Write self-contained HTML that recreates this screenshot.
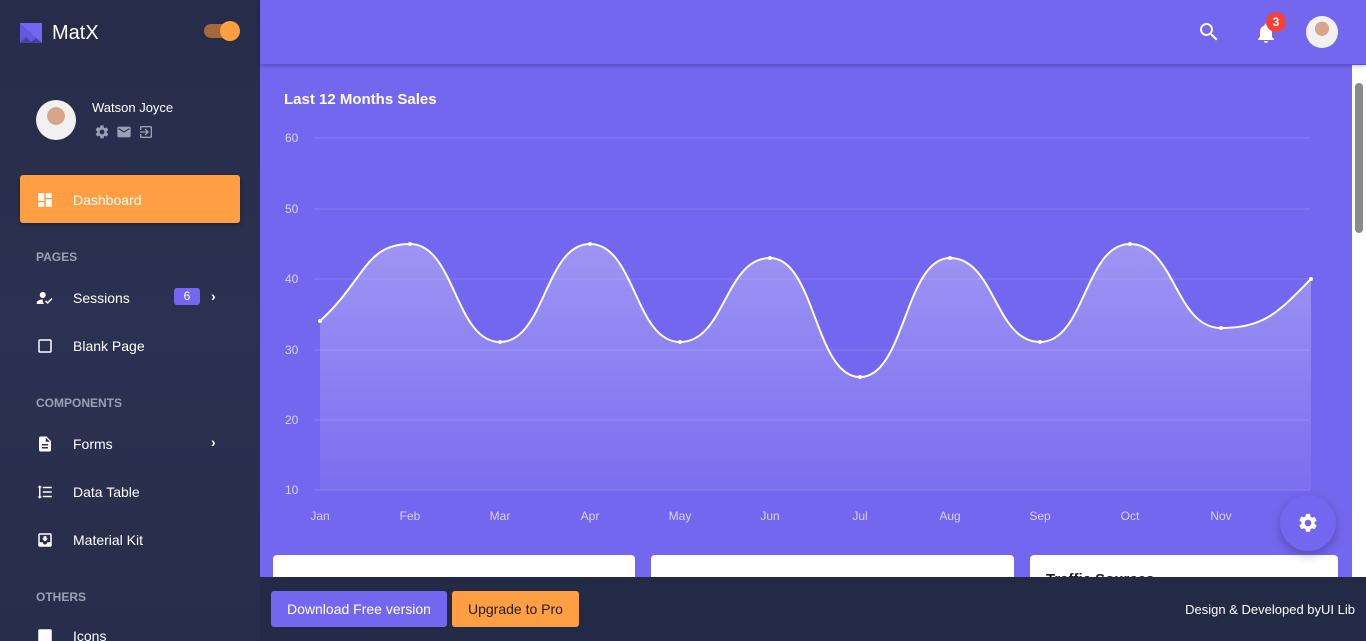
<!DOCTYPE html>
<html><head><meta charset="utf-8"><style>
*{margin:0;padding:0;box-sizing:border-box}
html,body{width:1366px;height:641px;overflow:hidden}
body{font-family:"Liberation Sans",sans-serif;background:#7467ef;position:relative}
.sb{position:absolute;left:0;top:0;width:260px;height:641px;background:linear-gradient(180deg,#262c49 0%,#2b3150 50%,#272d4a 100%);color:#fff}
.logo{position:absolute;left:20px;top:22px;display:flex;align-items:center;font-size:20px}
.tog{position:absolute;left:204px;top:24px;width:32px;height:14px;border-radius:7px;background:#a6683a}
.tog:after{content:"";position:absolute;right:-4px;top:-3px;width:20px;height:20px;border-radius:50%;background:#ff9e43}
.av{border-radius:50%;background:radial-gradient(circle at 50% 40%,#d9a58a 0 28%,#f1f1f1 29%);overflow:hidden;position:absolute}
.item{position:absolute;left:36px;font-size:14px;display:flex;align-items:center}
.item svg{margin-right:19px}
.sec{position:absolute;left:36px;font-size:12px;color:#9aa0b5;font-weight:bold}
.top{position:absolute;left:260px;top:0;width:1106px;height:64px;background:#7467ef;box-shadow:0 2px 4px rgba(0,0,0,.25);z-index:2}
.foot{position:absolute;left:260px;top:577px;width:1106px;height:64px;background:#222a45;z-index:3}
.btn{position:absolute;top:14px;height:36px;border-radius:3px;font-size:14px;display:flex;align-items:center;padding:0 16px}
.card{position:absolute;top:555px;height:40px;background:#fff;border-radius:4px}
.scroll{position:absolute;left:1352px;top:65px;width:14px;height:512px;background:#fff}
</style></head><body>
<div class="sb">
 <div class="logo"><svg width="22" height="22" viewBox="0 0 22 22"><path d="M0 0H22V20L16 15 11 19 6 14 0 20Z" fill="#7467ef"/><path d="M0 0L22 20H0Z" fill="#5a4fd6" opacity=".6"/></svg><span style="margin-left:10px">MatX</span></div>
 <div class="tog"></div>
 <div class="av" style="left:36px;top:100px;width:40px;height:40px"></div>
 <div style="position:absolute;left:92px;top:100px;font-size:13px">Watson Joyce</div>
 <div style="position:absolute;left:94px;top:124px;display:flex;gap:6px">
  <svg width="16" height="16" viewBox="0 0 24 24"><path fill="#9aa0b5" d="M19.14 12.94c.04-.3.06-.61.06-.94s-.02-.64-.07-.94l2.03-1.58a.49.49 0 00.12-.61l-1.92-3.32a.49.49 0 00-.59-.22l-2.39.96c-.5-.38-1.03-.7-1.62-.94l-.36-2.54A.48.48 0 0013.92 2h-3.84c-.24 0-.43.17-.47.41l-.36 2.54c-.59.24-1.13.57-1.62.94l-2.39-.96a.49.49 0 00-.59.22L2.74 8.87c-.12.21-.08.47.12.61l2.03 1.58c-.05.3-.09.63-.09.94s.02.64.07.94l-2.03 1.58a.49.49 0 00-.12.61l1.92 3.32c.12.22.37.29.59.22l2.39-.96c.5.38 1.03.7 1.62.94l.36 2.54c.05.24.24.41.48.41h3.84c.24 0 .44-.17.47-.41l.36-2.54c.59-.24 1.13-.56 1.62-.94l2.39.96c.22.08.47 0 .59-.22l1.92-3.32c.12-.22.07-.47-.12-.61l-2.01-1.58zM12 15.6A3.6 3.6 0 1112 8.4a3.6 3.6 0 010 7.2z"/></svg>
  <svg width="16" height="16" viewBox="0 0 24 24"><path fill="#9aa0b5" d="M20 4H4c-1.1 0-2 .9-2 2v12c0 1.1.9 2 2 2h16c1.1 0 2-.9 2-2V6c0-1.1-.9-2-2-2zm0 4l-8 5-8-5V6l8 5 8-5v2z"/></svg>
  <svg width="16" height="16" viewBox="0 0 24 24"><path fill="#9aa0b5" d="M10.09 15.59L11.5 17l5-5-5-5-1.41 1.41L12.67 11H3v2h9.67l-2.58 2.59zM19 3H5a2 2 0 00-2 2v4h2V5h14v14H5v-4H3v4a2 2 0 002 2h14c1.1 0 2-.9 2-2V5c0-1.1-.9-2-2-2z"/></svg>
 </div>
 <div style="position:absolute;left:20px;top:175px;width:220px;height:48px;background:#ff9e43;border-radius:3px;box-shadow:0 2px 4px rgba(0,0,0,.3)"></div>
 <div class="item" style="top:191px"><svg width="18" height="18" viewBox="0 0 24 24"><path fill="#fff" d="M3 13h8V3H3v10zm0 8h8v-6H3v6zm10 0h8V11h-8v10zm0-18v6h8V3h-8z"/></svg>Dashboard</div>
 <div class="sec" style="top:250px">PAGES</div>
 <div class="item" style="top:289px"><svg width="18" height="18" viewBox="0 0 24 24"><path fill="#fff" d="M9 12c2.2 0 4-1.8 4-4s-1.8-4-4-4-4 1.8-4 4 1.8 4 4 4zm0 2c-2.7 0-8 1.3-8 4v2h9.5l-.5-1 .5-.7c-.5-.1-1-.2-1.5-.3zm6.5 6l-3.5-3.5 1.4-1.4 2.1 2.1 5.1-5.2 1.4 1.4z"/></svg>Sessions</div>
 <div style="position:absolute;left:174px;top:288px;width:26px;height:17px;border-radius:3px;background:#7467ef;font-size:12px;text-align:center;line-height:17px">6</div>
 <div style="position:absolute;left:211px;top:288px;font-size:14px;font-weight:bold">›</div>
 <div class="item" style="top:337px"><svg width="18" height="18" viewBox="0 0 24 24"><path fill="#fff" d="M19 5v14H5V5h14m0-2H5c-1.1 0-2 .9-2 2v14c0 1.1.9 2 2 2h14c1.1 0 2-.9 2-2V5c0-1.1-.9-2-2-2z"/></svg>Blank Page</div>
 <div class="sec" style="top:396px">COMPONENTS</div>
 <div class="item" style="top:435px"><svg width="18" height="18" viewBox="0 0 24 24"><path fill="#fff" d="M14 2H6c-1.1 0-2 .9-2 2v16c0 1.1.9 2 2 2h12c1.1 0 2-.9 2-2V8l-6-6zm2 16H8v-2h8v2zm0-4H8v-2h8v2zm-3-5V3.5L18.5 9H13z"/></svg>Forms</div>
 <div style="position:absolute;left:211px;top:434px;font-size:14px;font-weight:bold">›</div>
 <div class="item" style="top:483px"><svg width="18" height="18" viewBox="0 0 24 24"><path fill="#fff" d="M9 5h12v2H9zm0 6h12v2H9zm0 6h12v2H9zM5 3L2 6h2v12H2l3 3 3-3H6V6h2z"/></svg>Data Table</div>
 <div class="item" style="top:531px"><svg width="18" height="18" viewBox="0 0 24 24"><path fill="#fff" d="M19 3H5c-1.1 0-2 .9-2 2v14c0 1.1.9 2 2 2h14c1.1 0 2-.9 2-2V5c0-1.1-.9-2-2-2zm0 12h-4c0 1.66-1.35 3-3 3s-3-1.34-3-3H5V5h14v10zm-3-5h-2V7h-4v3H8l4 4 4-4z"/></svg>Material Kit</div>
 <div class="sec" style="top:590px">OTHERS</div>
 <div class="item" style="top:627px"><svg width="18" height="18" viewBox="0 0 24 24"><rect x="3" y="3" width="18" height="18" rx="2" fill="#fff"/></svg>Icons</div>
</div>
<div class="top">
 <svg style="position:absolute;left:937px;top:20px" width="24" height="24" viewBox="0 0 24 24"><path fill="#fff" d="M15.5 14h-.79l-.28-.27A6.47 6.47 0 0016 9.5 6.5 6.5 0 109.5 16c1.61 0 3.09-.59 4.23-1.57l.27.28v.79l5 4.99L20.49 19l-4.99-5zm-6 0C7.01 14 5 11.99 5 9.5S7.01 5 9.5 5 14 7.01 14 9.5 11.99 14 9.5 14z"/></svg>
 <svg style="position:absolute;left:994px;top:21px" width="24" height="24" viewBox="0 0 24 24"><path fill="#fff" d="M12 22c1.1 0 2-.9 2-2h-4c0 1.1.89 2 2 2zm6-6v-5c0-3.07-1.64-5.64-4.5-6.32V4c0-.83-.67-1.5-1.5-1.5s-1.5.67-1.5 1.5v.68C7.63 5.36 6 7.92 6 11v5l-2 2v1h16v-1l-2-2z"/></svg>
 <div style="position:absolute;left:1006px;top:12px;width:20px;height:20px;border-radius:50%;background:#f44336;color:#fff;font-size:12px;font-weight:bold;text-align:center;line-height:20px">3</div>
 <div class="av" style="left:1046px;top:16px;width:32px;height:32px"></div>
</div>
<svg style="position:absolute;left:260px;top:64px" width="1092" height="513" viewBox="260 64 1092 513">
 <defs><linearGradient id="g" x1="0" y1="0" x2="0" y2="1"><stop offset="0" stop-color="#fff" stop-opacity=".3"/><stop offset="1" stop-color="#fff" stop-opacity=".05"/></linearGradient></defs>
 <text x="284" y="104" fill="#fff" font-size="15" font-weight="bold" font-family="Liberation Sans">Last 12 Months Sales</text>
 <g stroke="#fff" stroke-opacity=".15" stroke-width="1">
  <line x1="314" y1="138" x2="1310" y2="138"/><line x1="314" y1="209" x2="1310" y2="209"/><line x1="314" y1="279" x2="1310" y2="279"/><line x1="314" y1="350" x2="1310" y2="350"/><line x1="314" y1="420" x2="1310" y2="420"/><line x1="314" y1="490" x2="1310" y2="490"/>
 </g>
 <g fill="#d6d2fb" font-size="12" font-family="Liberation Sans">
  <text x="285" y="142">60</text><text x="285" y="213">50</text><text x="285" y="283">40</text><text x="285" y="354">30</text><text x="285" y="424">20</text><text x="285" y="494">10</text>
 </g>
 <g fill="#d6d2fb" font-size="12" font-family="Liberation Sans" text-anchor="middle">
  <text x="320" y="520">Jan</text><text x="410" y="520">Feb</text><text x="500" y="520">Mar</text><text x="590" y="520">Apr</text><text x="680" y="520">May</text><text x="770" y="520">Jun</text><text x="860" y="520">Jul</text><text x="950" y="520">Aug</text><text x="1040" y="520">Sep</text><text x="1130" y="520">Oct</text><text x="1221" y="520">Nov</text>
 </g>
 <path d="M320,321 C365,280 365,244 410,244 C455,244 455,342 500,342 C545,342 545,244 590,244 C635,244 635,342 680,342 C725,342 725,258 770,258 C815,258 815,377 860,377 C905,377 905,258 950,258 C995,258 995,342 1040,342 C1085,342 1085,244 1130,244 C1175,244 1175,328 1221,328 C1266,328 1280,310 1311,279 L1311,490 L320,490Z" fill="url(#g)"/>
 <path d="M320,321 C365,280 365,244 410,244 C455,244 455,342 500,342 C545,342 545,244 590,244 C635,244 635,342 680,342 C725,342 725,258 770,258 C815,258 815,377 860,377 C905,377 905,258 950,258 C995,258 995,342 1040,342 C1085,342 1085,244 1130,244 C1175,244 1175,328 1221,328 C1266,328 1280,310 1311,279" fill="none" stroke="#fff" stroke-width="2"/>
 <g fill="#fff"><circle cx="320" cy="321" r="2"/><circle cx="410" cy="244" r="2"/><circle cx="500" cy="342" r="2"/><circle cx="590" cy="244" r="2"/><circle cx="680" cy="342" r="2"/><circle cx="770" cy="258" r="2"/><circle cx="860" cy="377" r="2"/><circle cx="950" cy="258" r="2"/><circle cx="1040" cy="342" r="2"/><circle cx="1130" cy="244" r="2"/><circle cx="1221" cy="328" r="2"/><circle cx="1311" cy="279" r="2"/></g>
</svg>
<div class="card" style="left:273px;width:362px"></div>
<div class="card" style="left:651px;width:363px"></div>
<div class="card" style="left:1030px;width:308px"><div style="position:absolute;left:16px;top:16px;font-size:15px;font-weight:bold;color:#222">Traffic Sources</div></div>
<div style="position:absolute;left:1280px;top:495px;width:56px;height:56px;border-radius:50%;background:#7467ef;box-shadow:0 4px 10px rgba(0,0,0,.25);z-index:4">
 <svg style="position:absolute;left:17px;top:17px" width="22" height="22" viewBox="0 0 24 24"><path fill="#fff" d="M19.14 12.94c.04-.3.06-.61.06-.94s-.02-.64-.07-.94l2.03-1.58a.49.49 0 00.12-.61l-1.92-3.32a.49.49 0 00-.59-.22l-2.39.96c-.5-.38-1.03-.7-1.62-.94l-.36-2.54A.48.48 0 0013.92 2h-3.84c-.24 0-.43.17-.47.41l-.36 2.54c-.59.24-1.13.57-1.62.94l-2.39-.96a.49.49 0 00-.59.22L2.74 8.87c-.12.21-.08.47.12.61l2.03 1.58c-.05.3-.09.63-.09.94s.02.64.07.94l-2.03 1.58a.49.49 0 00-.12.61l1.92 3.32c.12.22.37.29.59.22l2.39-.96c.5.38 1.03.7 1.62.94l.36 2.54c.05.24.24.41.48.41h3.84c.24 0 .44-.17.47-.41l.36-2.54c.59-.24 1.13-.56 1.62-.94l2.39.96c.22.08.47 0 .59-.22l1.92-3.32c.12-.22.07-.47-.12-.61l-2.01-1.58zM12 15.6A3.6 3.6 0 1112 8.4a3.6 3.6 0 010 7.2z"/></svg>
</div>
<div class="scroll"><div style="position:absolute;left:3px;top:18px;width:8px;height:150px;border-radius:4px;background:#8a8a8a"></div></div>
<div class="foot">
 <div class="btn" style="left:11px;background:#7467ef;color:#fff">Download Free version</div>
 <div class="btn" style="left:192px;background:#ff9e43;color:#222">Upgrade to Pro</div>
 <div style="position:absolute;right:11px;top:25px;color:#fff;font-size:13px">Design &amp; Developed byUI Lib</div>
</div>
</body></html>
